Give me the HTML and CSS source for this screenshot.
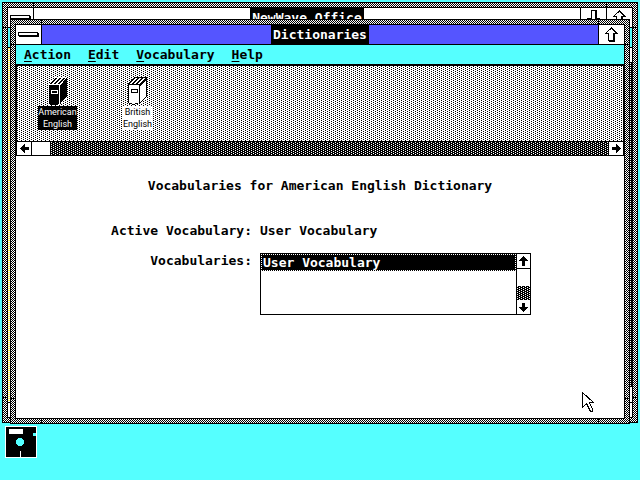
FILE: index.html
```html
<!DOCTYPE html>
<html lang="en">
<head>
<meta charset="utf-8">
<title>Dictionaries</title>
<link rel="stylesheet" href="styles.css">
</head>
<body>
<main class="desktop">
  <section class="window window-office" aria-label="NewWave Office">
    <div class="client">
      <header class="titlebar">
        <button class="box system" aria-label="Office system menu"><svg width="21" height="5"><path d="M0 0h20v4H0z"/><path class="paper" d="M1 1h18v2H1z"/><path d="M20 1h1v4H1V4h19z"/></svg></button>
        <div class="caption"><h2>NewWave Office</h2></div>
        <button class="box" aria-label="Minimize Office"><svg width="13" height="15"><path d="M4 0h6v8h3v1h-1v1h-1v1h-1v1H9v1H8v1H7v1H6v-1H5v-1H4v-1H3v-1H2v-1H1V9H0V8h4z"/><path class="paper" d="M5 1h3v8h2v1H9v1H8v1H7v1H6v-1H5v-1H4v-1H3V9h2z"/></svg></button>
        <button class="box" aria-label="Maximize Office"><svg width="13" height="15"><path d="M6 0h1v1h1v1h1v1h1v1h1v1h1v1h1v1h-3v8H4V14H3V7H0V6h1V5h1V4h1V3h1V2h1V1h1z"/><path class="paper" d="M6 2h1v1h1v1h1v1h1v1H8v7H4V6H2V5h1V4h1V3h2z"/></svg></button>
      </header>
      <div class="menubar"></div>
      <div class="office-body">
        <div class="office-left"></div>
        <div class="office-right"><i class="cell"></i><i class="track"></i><i class="cell"></i></div>
      </div>
      <div class="office-foot"></div>
    </div>
  </section>

  <section class="window window-dict" aria-label="Dictionaries">
    <div class="client">
      <header class="titlebar active">
        <button class="box system" aria-label="System menu"><svg width="21" height="5"><path d="M0 0h20v4H0z"/><path class="paper" d="M1 1h18v2H1z"/><path d="M20 1h1v4H1V4h19z"/></svg></button>
        <div class="caption"><h1>Dictionaries</h1></div>
        <button class="box" aria-label="Maximize"><svg width="13" height="15"><path d="M6 0h1v1h1v1h1v1h1v1h1v1h1v1h1v1h-3v8H4V14H3V7H0V6h1V5h1V4h1V3h1V2h1V1h1z"/><path class="paper" d="M6 2h1v1h1v1h1v1h1v1H8v7H4V6H2V5h1V4h1V3h2z"/></svg></button>
      </header>
      <nav class="menubar">
        <button><u>A</u>ction</button>
        <button><u>E</u>dit</button>
        <button><u>V</u>ocabulary</button>
        <button><u>H</u>elp</button>
      </nav>
      <div class="shelf">
        <button class="book selected">
          <svg width="20" height="30"><path class="paper" d="M0 8l7-7h12v20l-7 8H1z"/><path d="M1 9h10v19h-1v1H2v-1H1z"/><path d="M12 9h1V8h1V7h1V5h1V4h1V3h1V2h1v19h-1v1h-1v1h-1v1h-1v1h-1v1h-1v2h-1z"/><path d="M1 8l6-6h2L3 8zM5 8l6-6h2L7 8zM9 8l6-6h2l-6 6z"/><path class="paper" d="M3 14h7v4H3z"/><path d="M4 15h5v2H4z"/></svg>
          <span>American<br>English</span>
        </button>
        <button class="book">
          <svg width="21" height="30"><path class="paper" d="M1 8l7-7h12v20l-7 7H1z"/><path class="ink" d="M1.500 27V8.500h11V28M7 1.500h13M19.500 1v20"/><path d="M1 8l6-7h2L3 8zM5 8l6-7h2L7 8zM9 8l6-7h2l-6 7zM12 9l6-7h1v2l-6 6zM19 21v1h-1v1h-1v1h-1v1h-1v1h-1v1h-1v-1h1v-1h1v-1h1v-1h1v-1h1v-1z"/><path d="M2 27h3v1H2zM5 28h3v1H5zM8 27h3v1H8zM4 13h7v4H4z"/><path class="paper" d="M5 14h5v2H5z"/></svg>
          <span>British<br>English</span>
        </button>
      </div>
      <div class="hscroll">
        <button aria-label="Scroll left"><svg width="9" height="9"><path d="M4 0h1v3h4v3H5v3H4V8H3V7H2V6H1V5H0V4h1V3h1V2h1V1h1z"/></svg></button>
        <i class="thumb"></i>
        <i class="track"></i>
        <button aria-label="Scroll right"><svg width="9" height="9"><path d="M5 0H4v3H0v3h4v3h1V8h1V7h1V6h1V5h1V4H8V3H7V2H6V1H5z"/></svg></button>
      </div>
      <form class="panel">
        <p class="heading">Vocabularies for American English Dictionary</p>
        <div class="fields">
          <span class="label">Active Vocabulary:</span>
          <output>User Vocabulary</output>
          <label class="label" for="vocabularies">Vocabularies:</label>
          <div class="listbox">
            <select id="vocabularies" size="4"><option selected>User Vocabulary</option></select>
            <div class="vscroll">
              <button type="button" class="up" aria-label="Scroll up"><svg width="9" height="10"><path d="M4 0h1v1h1v1h1v1h1v1h1v1H6v5H3V5H0V4h1V3h1V2h1V1h1z"/></svg></button>
              <i class="thumb"></i>
              <i class="track"></i>
              <button type="button" aria-label="Scroll down"><svg width="9" height="9"><path d="M4 9h1V8h1V7h1V6h1V5h1V4H6V0H3v4H0v1h1v1h1v1h1v1h1z"/></svg></button>
            </div>
          </div>
        </div>
      </form>
    </div>
  </section>

  <button class="disk" aria-label="Disk"><svg width="32" height="32"><path class="paper" d="M0 0h32v32H0z"/><path d="M1 1h30v30H1z"/><path class="paper" d="M4 3h14v5H4zM15 25h1v6h-1z"/><path class="sky" d="M28 7h3v3h-3zM13 12h4v1h1v1h1v4h-1v1h-1v1h-4v-1h-1v-1h-1v-4h1v-1h1z"/></svg></button>

  <svg class="pointer" width="13" height="21"><path class="outline" d="M.5 .5v15l4-4 4 8h2v-2l-3-7h4z"/></svg>
</main>
</body>
</html>
```

FILE: styles.css
```css
:root {
  --cyan: #55ffff;
  --blue: #5555ff;
  --checker: repeating-conic-gradient(#000 0 25%, #fff 0 50%) 0 0 / 2px 2px;
  --dot-black: conic-gradient(at 1px 1px, transparent 75%, #000 0);
  --dot-white: conic-gradient(at 1px 1px, transparent 75%, #fff 0);
  --light: var(--dot-black) 0 0 / 4px 2px, var(--dot-black) 2px 1px / 4px 2px, #fff;
  --dark: var(--dot-white) 0 0 / 4px 2px, var(--dot-white) 2px 1px / 4px 2px, #000;
}

* { box-sizing: border-box; }

body {
  margin: 0;
  font: bold 13px/15px "DejaVu Sans Mono", monospace;
  color: #000;
}

button {
  margin: 0;
  padding: 0;
  border: 0;
  background: none;
  color: inherit;
  font: inherit;
}

h1, h2, p { margin: 0; font: inherit; }

svg { display: block; shape-rendering: crispEdges; }
.paper { fill: #fff; }
.sky { fill: var(--cyan); }
.ink { fill: none; stroke: #000; }
.outline { fill: #fff; stroke: #000; }

.desktop {
  position: relative;
  min-height: 100vh;
  background: var(--cyan);
  overflow: hidden;
}

/* Window frames: patterned border with sizing notches near each corner */
.window {
  --notch: linear-gradient(#000, #000);
  position: absolute;
  display: flex;
  border: 1px solid #000;
  padding: 4px;
  background:
    var(--notch) left 30px top 0 / 1px 100% no-repeat,
    var(--notch) right 30px top 0 / 1px 100% no-repeat,
    var(--notch) left 0 top 24px / 100% 1px no-repeat,
    var(--notch) left 0 bottom 24px / 100% 1px no-repeat,
    var(--checker);
}
.window-office { inset: 2px 2px 57px; }
.window-dict { inset: 19px 10px 56px; }

.client {
  flex: 1;
  display: flex;
  flex-direction: column;
  min-width: 0;
  border: 1px solid #000;
  background: #fff;
}

.titlebar {
  display: flex;
  height: 20px;
  border-bottom: 1px solid #000;
  background: #fff;
}
.titlebar.active { background: var(--blue); }

.box {
  display: grid;
  place-items: center;
  width: 26px;
  border-left: 1px solid #000;
  background: #fff;
}
.box.system { border-left: 0; border-right: 1px solid #000; }

.caption { flex: 1; display: flex; justify-content: center; }
.caption h1, .caption h2 {
  padding: 0 2px;
  background: #000;
  color: #fff;
  line-height: 19px;
}

.menubar {
  display: flex;
  gap: 17px;
  height: 20px;
  padding: 0 8px;
  border-bottom: 1px solid #000;
  background: var(--cyan);
}
.menubar button { line-height: 18px; }
.menubar u { text-underline-offset: 2px; text-decoration-thickness: 1px; }

.office-body { flex: 1; display: flex; justify-content: space-between; }
.office-left { width: 2px; background: repeating-linear-gradient(#ffff55 0 1px, #fff 1px 2px); }
.office-right { width: 2px; display: flex; flex-direction: column; }
.office-right .cell { height: 15px; border-bottom: 1px solid #000; }
.office-right .cell:last-child { border: 0; }
.office-foot { height: 15px; border-top: 1px solid #000; }

.track { flex: 1; background: var(--dark); }

.shelf {
  display: flex;
  gap: 29px;
  height: 77px;
  padding: 10px 15px;
  border: 1px solid #000;
  background: var(--light);
}
.book {
  display: flex;
  flex-direction: column;
  align-items: center;
  width: 51px;
  font: 9px/12px Roboto, "Liberation Sans", sans-serif;
}
.book span { background: #fff; }
.book.selected span { background: #000; color: #fff; }

.hscroll {
  display: flex;
  height: 14px;
  border: 1px solid #000;
  border-top: 0;
}
.hscroll button { display: grid; place-items: center; width: 14px; }
.hscroll .thumb { width: 20px; border: 1px solid #000; border-width: 0 1px; background: #fff; }

.panel { padding: 22px 16px; }
.heading { text-align: center; }
.fields {
  display: grid;
  grid-template-columns: 220px 271px;
  gap: 15px 8px;
  margin-top: 30px;
}
.panel .label { text-align: right; }

.listbox {
  display: flex;
  height: 62px;
  border: 1px solid #000;
}
select {
  flex: 1;
  appearance: none;
  margin: 0;
  padding: 0;
  border: 0;
  border-radius: 0;
  outline: 0;
  overflow: hidden;
  background: #fff;
  font: inherit;
  color: #000;
}
option {
  min-height: 0;
  padding: 0 1px;
  border: 1px dotted #fff;
  font: inherit;
  line-height: 13px;
}
option:checked {
  background: linear-gradient(#000, #000);
  -webkit-text-fill-color: #fff;
}
.vscroll {
  display: flex;
  flex-direction: column;
  width: 14px;
  border-left: 1px solid #000;
}
.vscroll button { display: grid; place-items: center; height: 14px; }
.vscroll .up { height: 15px; border-bottom: 1px solid #000; }
.vscroll .thumb { height: 17px; background: #fff; }

.disk { position: absolute; left: 5px; top: 426px; }
.pointer { position: absolute; left: 582px; top: 392px; }
```
